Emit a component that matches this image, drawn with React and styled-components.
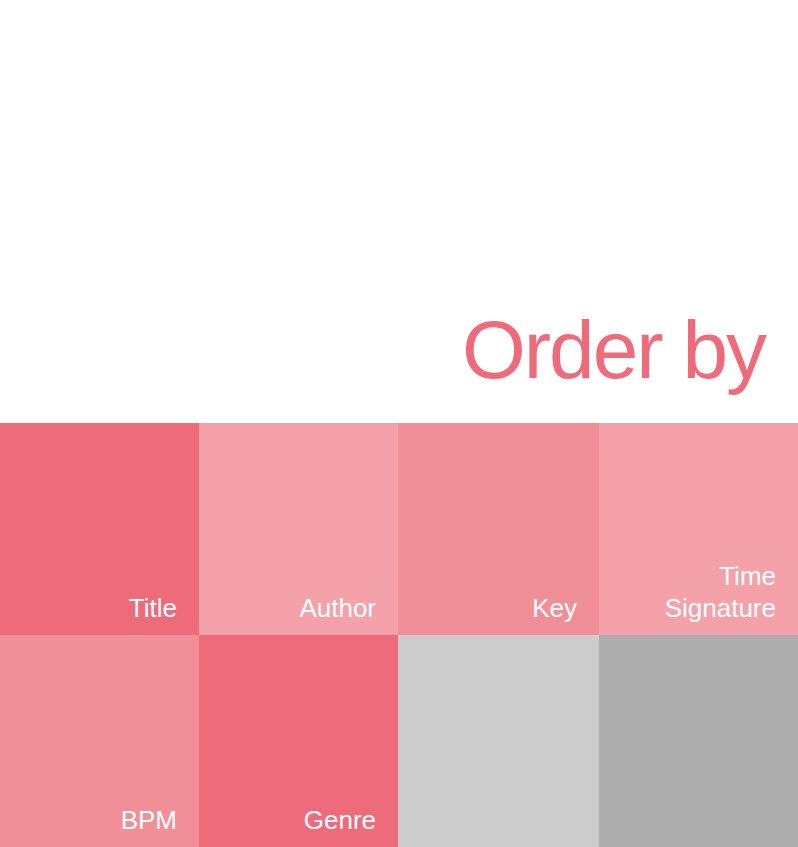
import React from "react";
import styled, { createGlobalStyle } from "styled-components";

const GlobalStyle = createGlobalStyle`
  html, body {
    margin: 0;
    padding: 0;
    background: #ffffff;
    font-family: "Liberation Sans", Arial, sans-serif;
  }
`;

const Page = styled.div`
  width: 798px;
  display: flex;
  flex-direction: column;
`;

const Header = styled.header`
  height: 423px;
  box-sizing: border-box;
  display: flex;
  justify-content: flex-end;
  align-items: flex-end;
  padding: 0 33px 32px 0;
`;

const Heading = styled.h1`
  margin: 0;
  font-size: 82px;
  line-height: 1;
  font-weight: 400;
  letter-spacing: -2px;
  color: #ee6b7b;
`;

const Grid = styled.div`
  display: grid;
  grid-template-columns: 199px 199px 201px 1fr;
  grid-auto-rows: 212px;
`;

const Cell = styled.button`
  border: 0;
  margin: 0;
  font: inherit;
  cursor: pointer;
  display: flex;
  flex-direction: column;
  justify-content: flex-end;
  align-items: flex-end;
  padding: 0 22px 11px 0;
  background: ${(p) => p.$bg};
  color: #ffffff;
  font-size: 26px;
  line-height: 32px;
  text-align: right;
`;

const options = [
  { label: "Title", bg: "#ee6b7b" },
  { label: "Author", bg: "#f4a1a9" },
  { label: "Key", bg: "#f18f99" },
  { label: "Time\nSignature", bg: "#f4a1a9" },
  { label: "BPM", bg: "#f18f99" },
  { label: "Genre", bg: "#ee6b7b" },
  { label: "", bg: "#cccccc" },
  { label: "", bg: "#adadad" },
];

const App = () => {
  return (
    <Page>
      <GlobalStyle />
      <Header>
        <Heading>Order by</Heading>
      </Header>
      <Grid>
        {options.map((o, i) => (
          <Cell key={i} $bg={o.bg}>
            {o.label.split("\n").map((line) => (
              <span key={line}>{line}</span>
            ))}
          </Cell>
        ))}
      </Grid>
    </Page>
  );
};

export default App;
